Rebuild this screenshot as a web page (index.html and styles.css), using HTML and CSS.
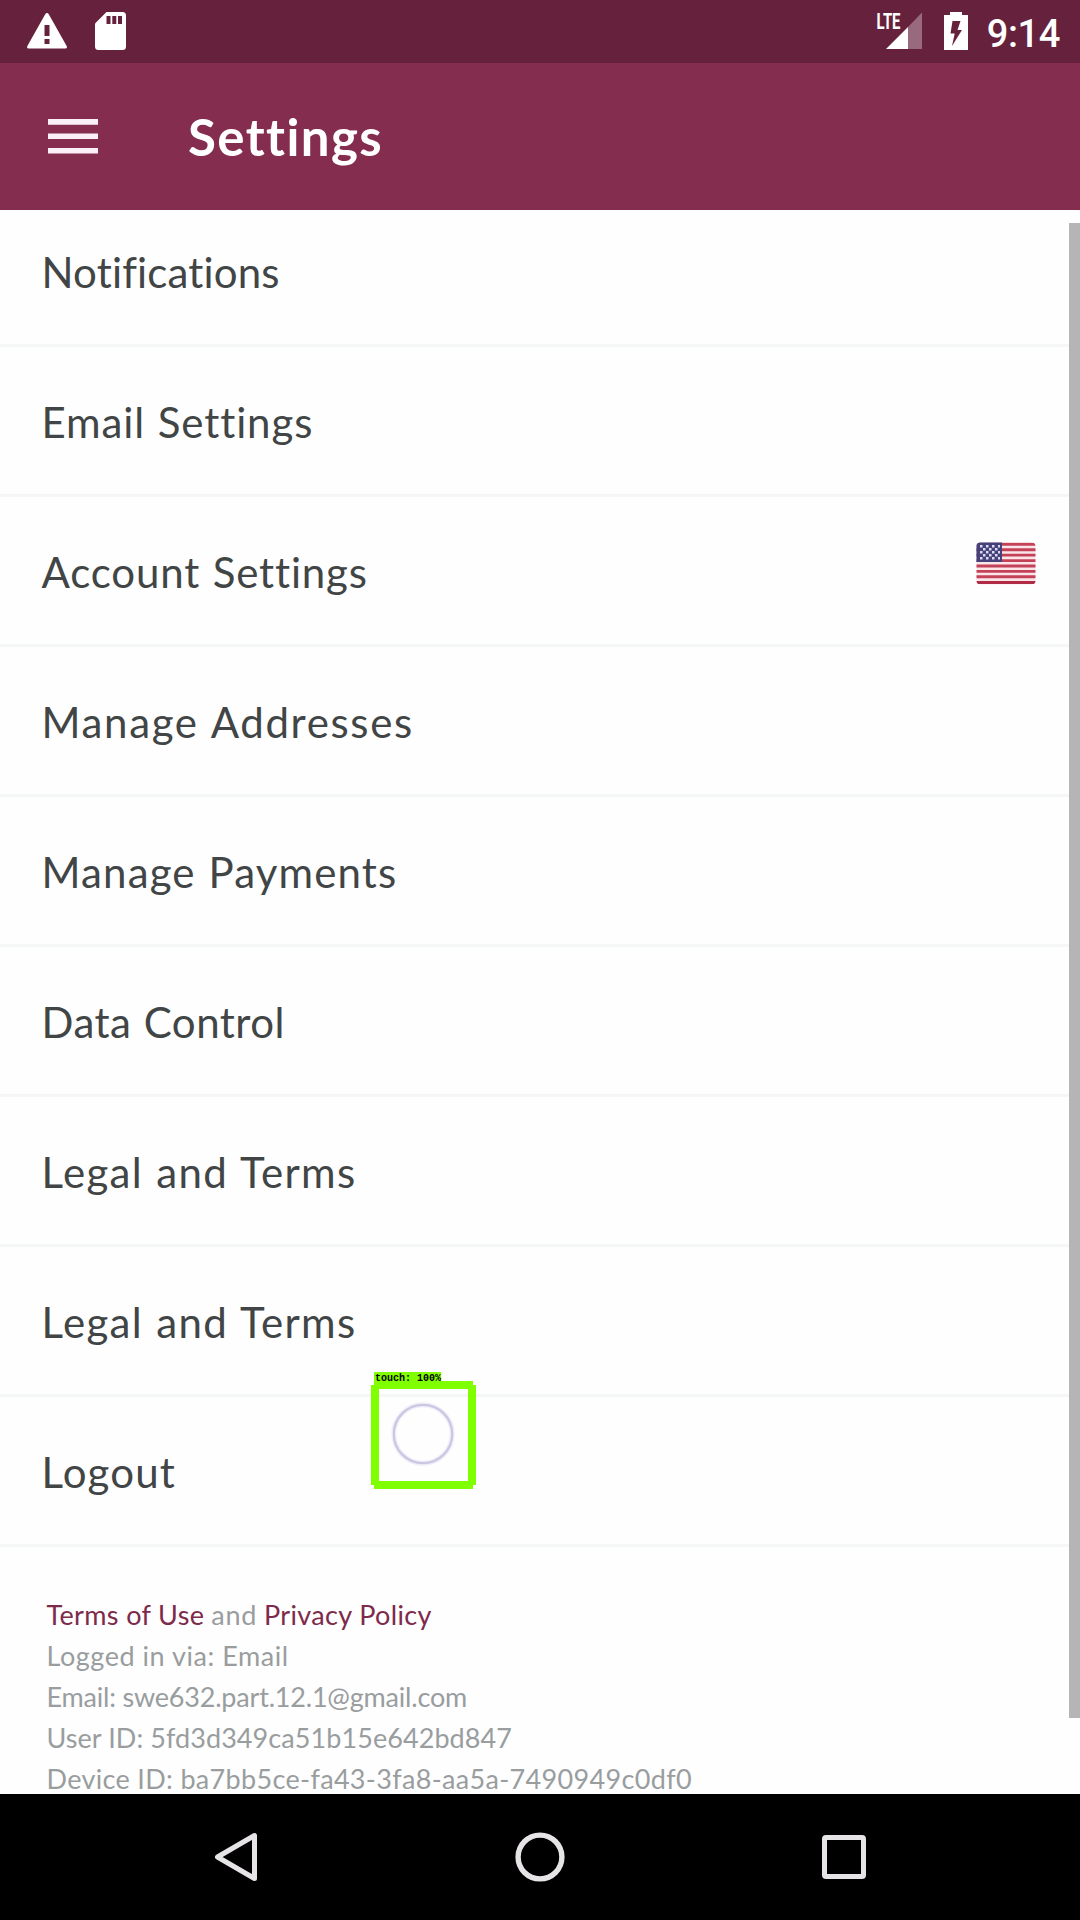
FILE: index.html
```html
<!DOCTYPE html>
<html lang="en">
<head>
<meta charset="utf-8">
<title>Settings</title>
<link rel="stylesheet" href="styles.css">
</head>
<body>
<div class="screen">
  <div class="status">
    <div class="status-group">
      <svg class="warning" width="40" height="36" viewBox="0 0 40 36"><path fill="#fff" d="M18.4 1Q20 -1 21.6 1L39.6 33Q40.4 35.4 38.3 35.4H1.7Q-.4 35.4 .4 33Z"/><path fill="#66223d" d="M17.500 12h5v11h-5zM17.500 26h5v5h-5z"/></svg>
      <svg width="31" height="38" viewBox="0 0 31 38"><path fill="#fff" d="M11.500 0H27.500Q31 0 31 3.500V34.500Q31 38 27.500 38H3.500Q0 38 0 34.500V11.500Z"/><path fill="#66223d" d="M11.500 4h4v8h-4zM17.300 4h4v8h-4zM23 4h4v8h-4z"/></svg>
    </div>
    <div class="status-group right">
      <svg class="signal" width="48" height="38" viewBox="0 0 48 38"><path fill="#fff" d="M10 37L32 15V37Z"/><path fill="#99697e" d="M32 15L46 .6V37H32Z"/><text class="lte" x="0.500" y="17" textLength="24" lengthAdjust="spacingAndGlyphs">LTE</text></svg>
      <svg width="24" height="38" viewBox="0 0 24 38"><path fill="#fff" d="M6 0H18V3H24V38H0V3H6Z"/><path fill="#66223d" d="M8.500 9H16.500L13.500 18H18L8 34L10.700 21.500H6.500Z"/></svg>
      <span class="clock">9:14</span>
    </div>
  </div>
  <header class="appbar">
    <svg class="menu" width="50" height="35" viewBox="0 0 50 35"><path fill="#fbeff8" d="M0 0h50v5.700H0zM0 14.500h50v5.500H0zM0 29h50v5.500H0z"/></svg>
    <h1 class="title">Settings</h1>
  </header>
  <main class="content">
    <ul class="list">
      <li class="row notifications">Notifications</li>
      <li class="row email">Email Settings</li>
      <li class="row account">Account Settings
        <svg class="flag" width="60" height="43" viewBox="0 0 60 43">
          <defs>
            <clipPath id="flag-shape"><rect x="0.500" y="0.500" width="59" height="42" rx="4"/></clipPath>
            <pattern id="stars" x="4" y="3" width="6" height="6" patternUnits="userSpaceOnUse"><path fill="#dcdaf0" d="M0 0h2.500v2.500H0zM3 3h2.500v2.500H3z"/></pattern>
          </defs>
          <g clip-path="url(#flag-shape)">
            <path fill="#fae6ea" d="M0 0h60v43H0z"/>
            <path stroke="#c44158" stroke-width="2.900" d="M0 2.300h60M0 7.700h60M0 13.100h60M0 18.600h60M0 24h60M0 29.400h60M0 34.800h60"/>
            <path stroke="#b02c45" stroke-width="3" d="M0 40.500h60"/>
            <path fill="#45417a" d="M0 0h26v20H0z"/>
            <path fill="url(#stars)" d="M4 3h20v15H4z"/>
          </g>
        </svg>
      </li>
      <li class="row addresses">Manage Addresses</li>
      <li class="row payments">Manage Payments</li>
      <li class="row data">Data Control</li>
      <li class="row legal">Legal and Terms</li>
      <li class="row legal">Legal and Terms</li>
      <li class="row logout">Logout</li>
    </ul>
    <div class="info">
      <p class="line"><a class="link">Terms of Use</a> <span class="joiner">and</span> <a class="link">Privacy Policy</a></p>
      <p class="line via">Logged in via: Email</p>
      <p class="line address">Email: swe632.part.12.1@gmail.com</p>
      <p class="line">User ID: 5fd3d349ca51b15e642bd847</p>
      <p class="line device">Device ID: ba7bb5ce-fa43-3fa8-aa5a-7490949c0df0</p>
    </div>
    <div class="scrollbar"></div>
  </main>
  <nav class="navbar">
    <svg width="60" height="60" viewBox="0 0 60 60"><path fill="none" stroke="#e6e4e6" stroke-width="5" stroke-linejoin="round" d="M11.500 30L48.500 8.500V51.500Z"/></svg>
    <svg width="60" height="60" viewBox="0 0 60 60"><circle cx="30" cy="30" r="21.900" fill="none" stroke="#e6e4e6" stroke-width="5.400"/></svg>
    <svg width="60" height="60" viewBox="0 0 60 60"><rect x="10.500" y="10.500" width="39" height="39" rx="1.500" fill="none" stroke="#e6e4e6" stroke-width="5"/></svg>
  </nav>
  <div class="touch">
    <svg width="105" height="108" viewBox="0 0 105 108"><path fill="#80ff00" d="M3 0h99v8H3zM3 100h99v8H3zM0 4h8v100H0zM97 4h8v100H97z"/><circle cx="52" cy="53" r="29.200" fill="none" stroke="#f0edf9" stroke-width="5"/><circle cx="52" cy="53" r="29.200" fill="none" stroke="#cbc6e2" stroke-width="2.200"/></svg>
    <span class="touch-label">touch: 100%</span>
  </div>
</div>
</body>
</html>
```
FILE: styles.css
```css
* { box-sizing: border-box; }
body { margin: 0; }
svg { display: block; flex: none; }

.screen {
  position: relative;
  width: 1080px;
  height: 1920px;
  display: flex;
  flex-direction: column;
  overflow: hidden;
  background: #fefefe;
  font-family: Lato, sans-serif;
}

.status {
  height: 63px;
  display: flex;
  justify-content: space-between;
  padding: 12px 20px 0 27px;
  background: #66223d;
}
.status-group { display: flex; gap: 28px; }
.status-group.right { gap: 20px; }
.warning { margin-top: 1px; }
.signal { overflow: visible; }
.lte { font: 700 22px Roboto, sans-serif; fill: #fff; }
.clock {
  font: 500 38px/44px Roboto, sans-serif;
  letter-spacing: -0.4px;
  color: #fff;
  margin: 0 0 0 -1px;
}

.appbar {
  height: 147px;
  display: flex;
  align-items: center;
  padding-left: 48px;
  background: #842d4f;
}
.menu { margin-top: -1px; }
.title {
  margin: 0 0 0 90px;
  font-size: 51px;
  line-height: 60px;
  font-weight: 700;
  letter-spacing: 1.4px;
  color: #fff;
}

.content {
  position: relative;
  height: 1584px;
  overflow: hidden;
}
.list { list-style: none; margin: -13px 0 0; padding: 0; }
.row {
  height: 150px;
  padding: 3px 43px 0 41.5px;
  display: flex;
  align-items: center;
  justify-content: space-between;
  border-bottom: 3px solid #f5f7f7;
  font-size: 42px;
  word-spacing: 1px;
  color: #414545;
}
.notifications { letter-spacing: 0.16px; }
.email { letter-spacing: 0.9px; }
.account { letter-spacing: 0.85px; }
.addresses { letter-spacing: 1.65px; }
.payments { letter-spacing: 1.15px; }
.data { letter-spacing: 0.5px; }
.legal { letter-spacing: 1.35px; }
.logout { letter-spacing: 1.15px; }
.flag { margin: -18px 1px 0 0; }

.info {
  padding: 47px 46.500px 0;
  font-size: 27px;
  line-height: 41px;
  letter-spacing: 0.07px;
  color: #999d9e;
}
.line { margin: 0; white-space: nowrap; }
.link { color: #7d2a4b; letter-spacing: 0.35px; }
.joiner { letter-spacing: 0.7px; }
.via { letter-spacing: 0.55px; }
.address { letter-spacing: -0.2px; }
.device { letter-spacing: 0.33px; }

.scrollbar {
  position: absolute;
  top: 13px;
  right: 0;
  width: 11px;
  height: 1495px;
  background: #b5b5b5;
}

.navbar {
  height: 126px;
  display: flex;
  align-items: center;
  justify-content: space-between;
  padding: 0 206px;
  background: #000;
}

.touch { position: absolute; left: 371px; top: 1381px; }
.touch-label {
  position: absolute;
  left: 3px;
  top: -9px;
  width: 67px;
  height: 13px;
  padding: 1px 0 0 1px;
  background: #80ff00;
  color: #000;
  font: 700 10px/12px "Liberation Mono", monospace;
  white-space: nowrap;
}
```
